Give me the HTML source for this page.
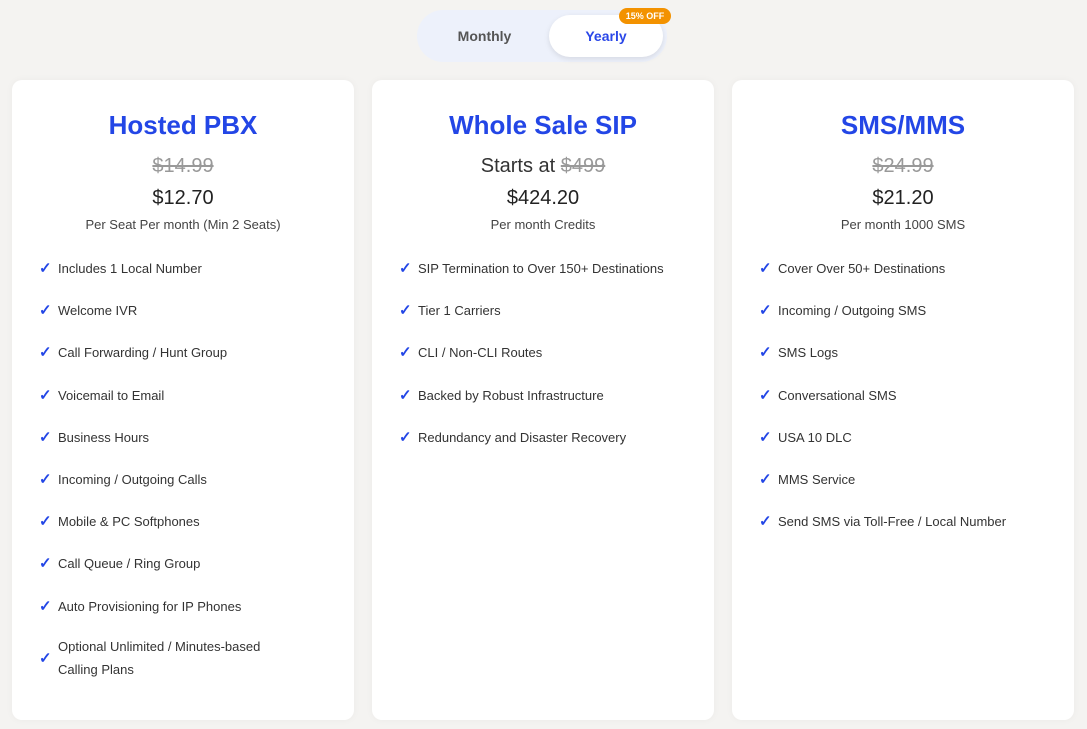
<!DOCTYPE html>
<html><head><style>
body{margin:0;width:1087px;height:729px;background:#f4f3f1;font-family:"Liberation Sans",sans-serif;position:relative;overflow:hidden}
.tog{position:absolute;left:417px;top:10px;width:250px;height:52px;border-radius:26px;background:#edf1fb}
.tog .m{position:absolute;left:0;top:0;width:135px;line-height:52px;text-align:center;font-weight:bold;font-size:14px;color:#555}
.tog .y{position:absolute;left:132px;top:5px;width:114px;height:42px;border-radius:21px;background:#fff;box-shadow:0 2px 6px rgba(0,0,0,.1);line-height:42px;text-align:center;font-weight:bold;font-size:14px;color:#2a47e8}
.badge{position:absolute;left:619px;top:8px;width:52px;height:16px;border-radius:8px;background:#f39200;color:#fff;font-size:9px;font-weight:bold;text-align:center;line-height:16px}
.card{position:absolute;top:80px;width:342px;height:640px;background:#fff;border-radius:10px;box-shadow:0 0 8px rgba(0,0,0,.04)}
.t{position:absolute;top:30px;width:100%;text-align:center;font-size:26px;font-weight:bold;color:#2346e6}
.o{position:absolute;top:75px;width:100%;text-align:center;font-size:20px;color:#999;}
.o s{color:#999}
.p{position:absolute;top:107px;width:100%;text-align:center;font-size:20px;color:#222}
.sub{position:absolute;top:137px;width:100%;text-align:center;font-size:13px;color:#444}
ul{position:absolute;top:180px;left:27px;margin:0;padding:0;list-style:none}
li{height:42.2px;font-size:13px;color:#333;position:relative;padding-left:19px;line-height:18px}
li:before{content:"✓";position:absolute;left:0;top:0;color:#2346e6;font-size:15px;font-weight:bold}
li.two{line-height:23px;margin-top:-5px}
li.two:before{top:12px}
</style></head><body>
<div class="tog"><div class="m">Monthly</div><div class="y">Yearly</div></div>
<div class="badge">15% OFF</div>

<div class="card" style="left:12px">
<div class="t">Hosted PBX</div>
<div class="o"><s>$14.99</s></div>
<div class="p">$12.70</div>
<div class="sub">Per Seat Per month (Min 2 Seats)</div>
<ul>
<li>Includes 1 Local Number</li><li>Welcome IVR</li><li>Call Forwarding / Hunt Group</li><li>Voicemail to Email</li><li>Business Hours</li><li>Incoming / Outgoing Calls</li><li>Mobile &amp; PC Softphones</li><li>Call Queue / Ring Group</li><li>Auto Provisioning for IP Phones</li><li class="two">Optional Unlimited / Minutes-based<br>Calling Plans</li>
</ul></div>

<div class="card" style="left:372px">
<div class="t">Whole Sale SIP</div>
<div class="o" style="color:#333">Starts at <s>$499</s></div>
<div class="p">$424.20</div>
<div class="sub">Per month Credits</div>
<ul>
<li>SIP Termination to Over 150+ Destinations</li><li>Tier 1 Carriers</li><li>CLI / Non-CLI Routes</li><li>Backed by Robust Infrastructure</li><li>Redundancy and Disaster Recovery</li>
</ul></div>

<div class="card" style="left:732px">
<div class="t">SMS/MMS</div>
<div class="o"><s>$24.99</s></div>
<div class="p">$21.20</div>
<div class="sub">Per month 1000 SMS</div>
<ul>
<li>Cover Over 50+ Destinations</li><li>Incoming / Outgoing SMS</li><li>SMS Logs</li><li>Conversational SMS</li><li>USA 10 DLC</li><li>MMS Service</li><li>Send SMS via Toll-Free / Local Number</li>
</ul></div>
</body></html>
